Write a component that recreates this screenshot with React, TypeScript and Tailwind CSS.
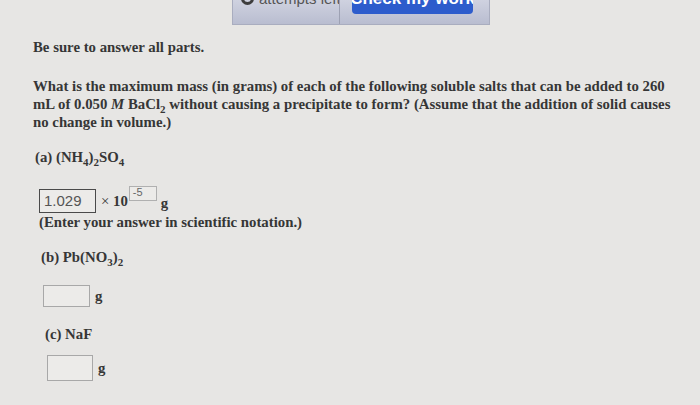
import React from 'react';

const serif = { fontFamily: '"Liberation Serif", "Times New Roman", serif' };
const sans = { fontFamily: '"Liberation Sans", Arial, sans-serif' };

const Sub = ({ children }: { children: React.ReactNode }) => (
    <span className="text-[11px] inline-block translate-y-[4px] leading-none">{children}</span>
);

const AnswerBox = ({ value, className }: { value?: string; className: string }) => (
    <div className={`bg-[#ecebe9] border flex items-center px-1 font-normal text-[15px] text-[#555] ${className}`} style={sans}>
        {value}
    </div>
);

export default function App() {
    return (
        <div className="w-[700px] h-[405px] overflow-hidden bg-[#e7e6e4] text-[#363636]" style={serif}>
            {/* top toolbar, cut off by the photo */}
            <div className="ml-[232px] w-[258px] h-[25px] flex bg-gradient-to-b from-[#cfd2e0] to-[#b9bdd0] border border-t-0 border-[#a9adbf] overflow-hidden">
                <div className="w-[107px] shrink-0 border-r border-[#9da1b3] overflow-hidden">
                    <div className="flex items-center gap-[5px] pl-[8px] -mt-[9px] whitespace-nowrap">
                        <span className="w-[13px] h-[13px] shrink-0 rounded-full border-[3px] border-[#3d3d3d]"></span>
                        <span className="text-[15px] text-[#555] leading-none" style={sans}>
                            attempts left
                        </span>
                    </div>
                </div>
                <div className="pl-[12px]">
                    <div className="w-[121px] h-[14px] bg-[#2d5ccc] rounded-b-[4px] overflow-hidden flex justify-center">
                        <span className="text-white font-bold text-[17px] leading-none -mt-[10px] whitespace-nowrap" style={sans}>
                            Check my work
                        </span>
                    </div>
                </div>
            </div>

            <div className="pl-[33px] font-bold text-[14.8px] leading-[18px] whitespace-nowrap">
                <p className="mt-[13px]">Be sure to answer all parts.</p>

                <p className="mt-[21px]">
                    What is the maximum mass (in grams) of each of the following soluble salts that can be added to 260
                    <br />
                    mL of 0.050 <i>M</i> BaCl<Sub>2</Sub> without causing a precipitate to form? (Assume that the addition of solid causes
                    <br />
                    no change in volume.)
                </p>

                <p className="mt-[17px] pl-[2px]">
                    (a) (NH<Sub>4</Sub>)<Sub>2</Sub>SO<Sub>4</Sub>
                </p>

                <div className="mt-[20px] ml-[6px] flex items-start">
                    <AnswerBox value="1.029" className="w-[57px] h-[24px] mt-[3px] border-[#4a4a4a]" />
                    <span className="ml-[5px] mt-[6px]">
                        <span className="font-normal">×</span> 10
                    </span>
                    <div
                        className="w-[28px] h-[15px] ml-[1px] border border-[#b0b0b0] bg-[#ecebe9] font-normal text-[11px] text-[#666] leading-none pl-[3px]"
                        style={sans}
                    >
                        -5
                    </div>
                    <span className="ml-[4px] mt-[8px]">g</span>
                </div>
                <p className="pl-[6px]">(Enter your answer in scientific notation.)</p>

                <p className="mt-[17px] pl-[8px]">
                    (b) Pb(NO<Sub>3</Sub>)<Sub>2</Sub>
                </p>

                <div className="mt-[19px] ml-[10px] flex items-center">
                    <AnswerBox className="w-[47px] h-[22px] border-[#a8a8a8]" />
                    <span className="ml-[5px]">g</span>
                </div>

                <p className="mt-[18px] pl-[12px]">(c) NaF</p>

                <div className="mt-[12px] ml-[14px] flex items-center">
                    <AnswerBox className="w-[46px] h-[26px] border-[#a8a8a8]" />
                    <span className="ml-[5px]">g</span>
                </div>
            </div>
        </div>
    );
}
